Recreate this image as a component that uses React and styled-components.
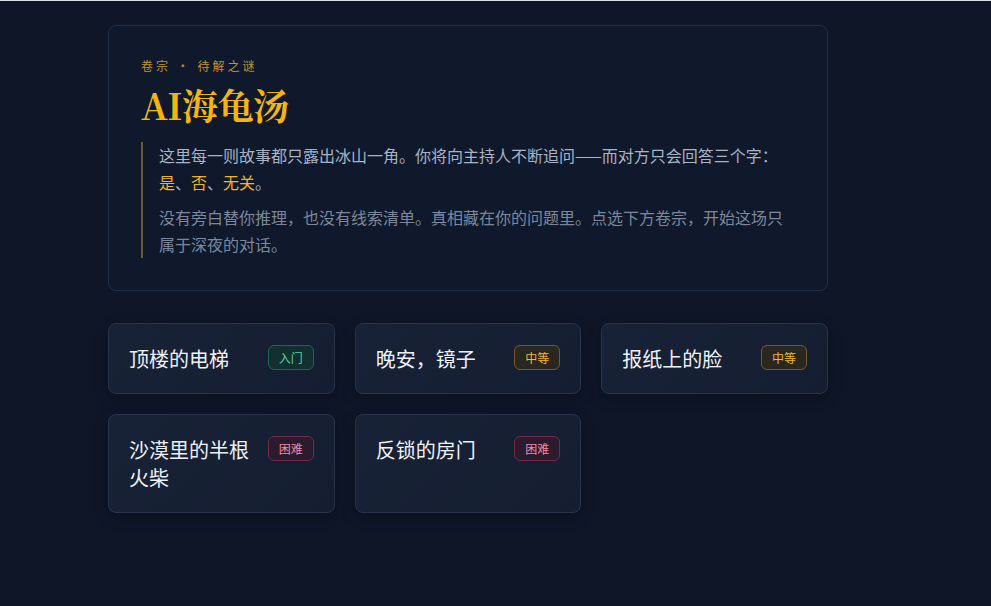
import styled, { createGlobalStyle } from 'styled-components';

const GlobalStyle = createGlobalStyle`
    html, body {
        margin: 0;
        padding: 0;
        background: #0e1628;
        font-family: 'Noto Sans CJK SC', 'Noto Sans', sans-serif;
    }
    body {
        border-top: 1px solid #dde2ea;
        min-height: 605px;
    }
`;

const Page = styled.main`
    width: 720px;
    padding: 24px 0 0 108px;
`;

const Hero = styled.section`
    background: #10192c;
    border: 1px solid #242f45;
    border-radius: 8px;
    padding: 31px 32px 32px;
`;

const Eyebrow = styled.div`
    color: #c09430;
    font-size: 12px;
    letter-spacing: 3px;
    line-height: 18px;
`;

const Title = styled.h1`
    margin: 6px 0 13px;
    color: #f4b60e;
    font-family: 'Noto Serif CJK SC', 'Liberation Serif', serif;
    font-size: 36px;
    font-weight: 700;
    line-height: 48px;
    letter-spacing: -0.5px;
`;

const Quote = styled.blockquote`
    margin: 0;
    padding: 0 0 0 16px;
    border-left: 2px solid #6b5a2b;
`;

const Para = styled.p`
    margin: ${(p) => (p.$first ? '0' : '8px 0 0')};
    color: ${(p) => (p.$first ? '#a9b3c3' : '#7c879a')};
    font-size: 16px;
    line-height: 27px;
`;

const Em = styled.span`
    color: #f0b429;
`;

const Grid = styled.div`
    display: grid;
    grid-template-columns: repeat(3, 1fr);
    gap: 20px;
    margin-top: 32px;
`;

const Card = styled.div`
    display: flex;
    justify-content: space-between;
    align-items: flex-start;
    gap: 14px;
    padding: 20px;
    background: linear-gradient(135deg, #182236, #151e31);
    border: 1px solid #29344b;
    border-radius: 8px;
    box-shadow: 0 4px 14px rgba(0, 0, 0, 0.25);
`;

const CardTitle = styled.div`
    color: #eef2f8;
    font-size: 20px;
    line-height: 28px;
    padding-top: 1px;
`;

const tones = {
    easy: { color: '#52d0a8', border: '#1e6458', bg: '#12302e' },
    mid: { color: '#f3b73a', border: '#7a5a22', bg: '#2a2720' },
    hard: { color: '#f08aa8', border: '#74284a', bg: '#2a1b2e' },
};

const Badge = styled.span`
    flex-shrink: 0;
    margin-top: 1px;
    padding: 0 10px;
    height: 23px;
    line-height: 23px;
    font-size: 12px;
    border-radius: 6px;
    color: ${(p) => tones[p.$tone].color};
    border: 1px solid ${(p) => tones[p.$tone].border};
    background: ${(p) => tones[p.$tone].bg};
`;

const puzzles = [
    { title: '顶楼的电梯', level: '入门', tone: 'easy' },
    { title: '晚安，镜子', level: '中等', tone: 'mid' },
    { title: '报纸上的脸', level: '中等', tone: 'mid' },
    { title: '沙漠里的半根火柴', level: '困难', tone: 'hard' },
    { title: '反锁的房门', level: '困难', tone: 'hard' },
];

const App = () => {
    return (
        <>
            <GlobalStyle />
            <Page>
                <Hero>
                    <Eyebrow>卷宗 · 待解之谜</Eyebrow>
                    <Title>AI海龟汤</Title>
                    <Quote>
                        <Para $first>
                            这里每一则故事都只露出冰山一角。你将向主持人不断追问——而对方只会回答三个字：
                            <Em>是</Em>、<Em>否</Em>、<Em>无关</Em>。
                        </Para>
                        <Para>
                            没有旁白替你推理，也没有线索清单。真相藏在你的问题里。点选下方卷宗，开始这场只属于深夜的对话。
                        </Para>
                    </Quote>
                </Hero>
                <Grid>
                    {puzzles.map((p) => (
                        <Card key={p.title}>
                            <CardTitle>{p.title}</CardTitle>
                            <Badge $tone={p.tone}>{p.level}</Badge>
                        </Card>
                    ))}
                </Grid>
            </Page>
        </>
    );
};

export default App;
